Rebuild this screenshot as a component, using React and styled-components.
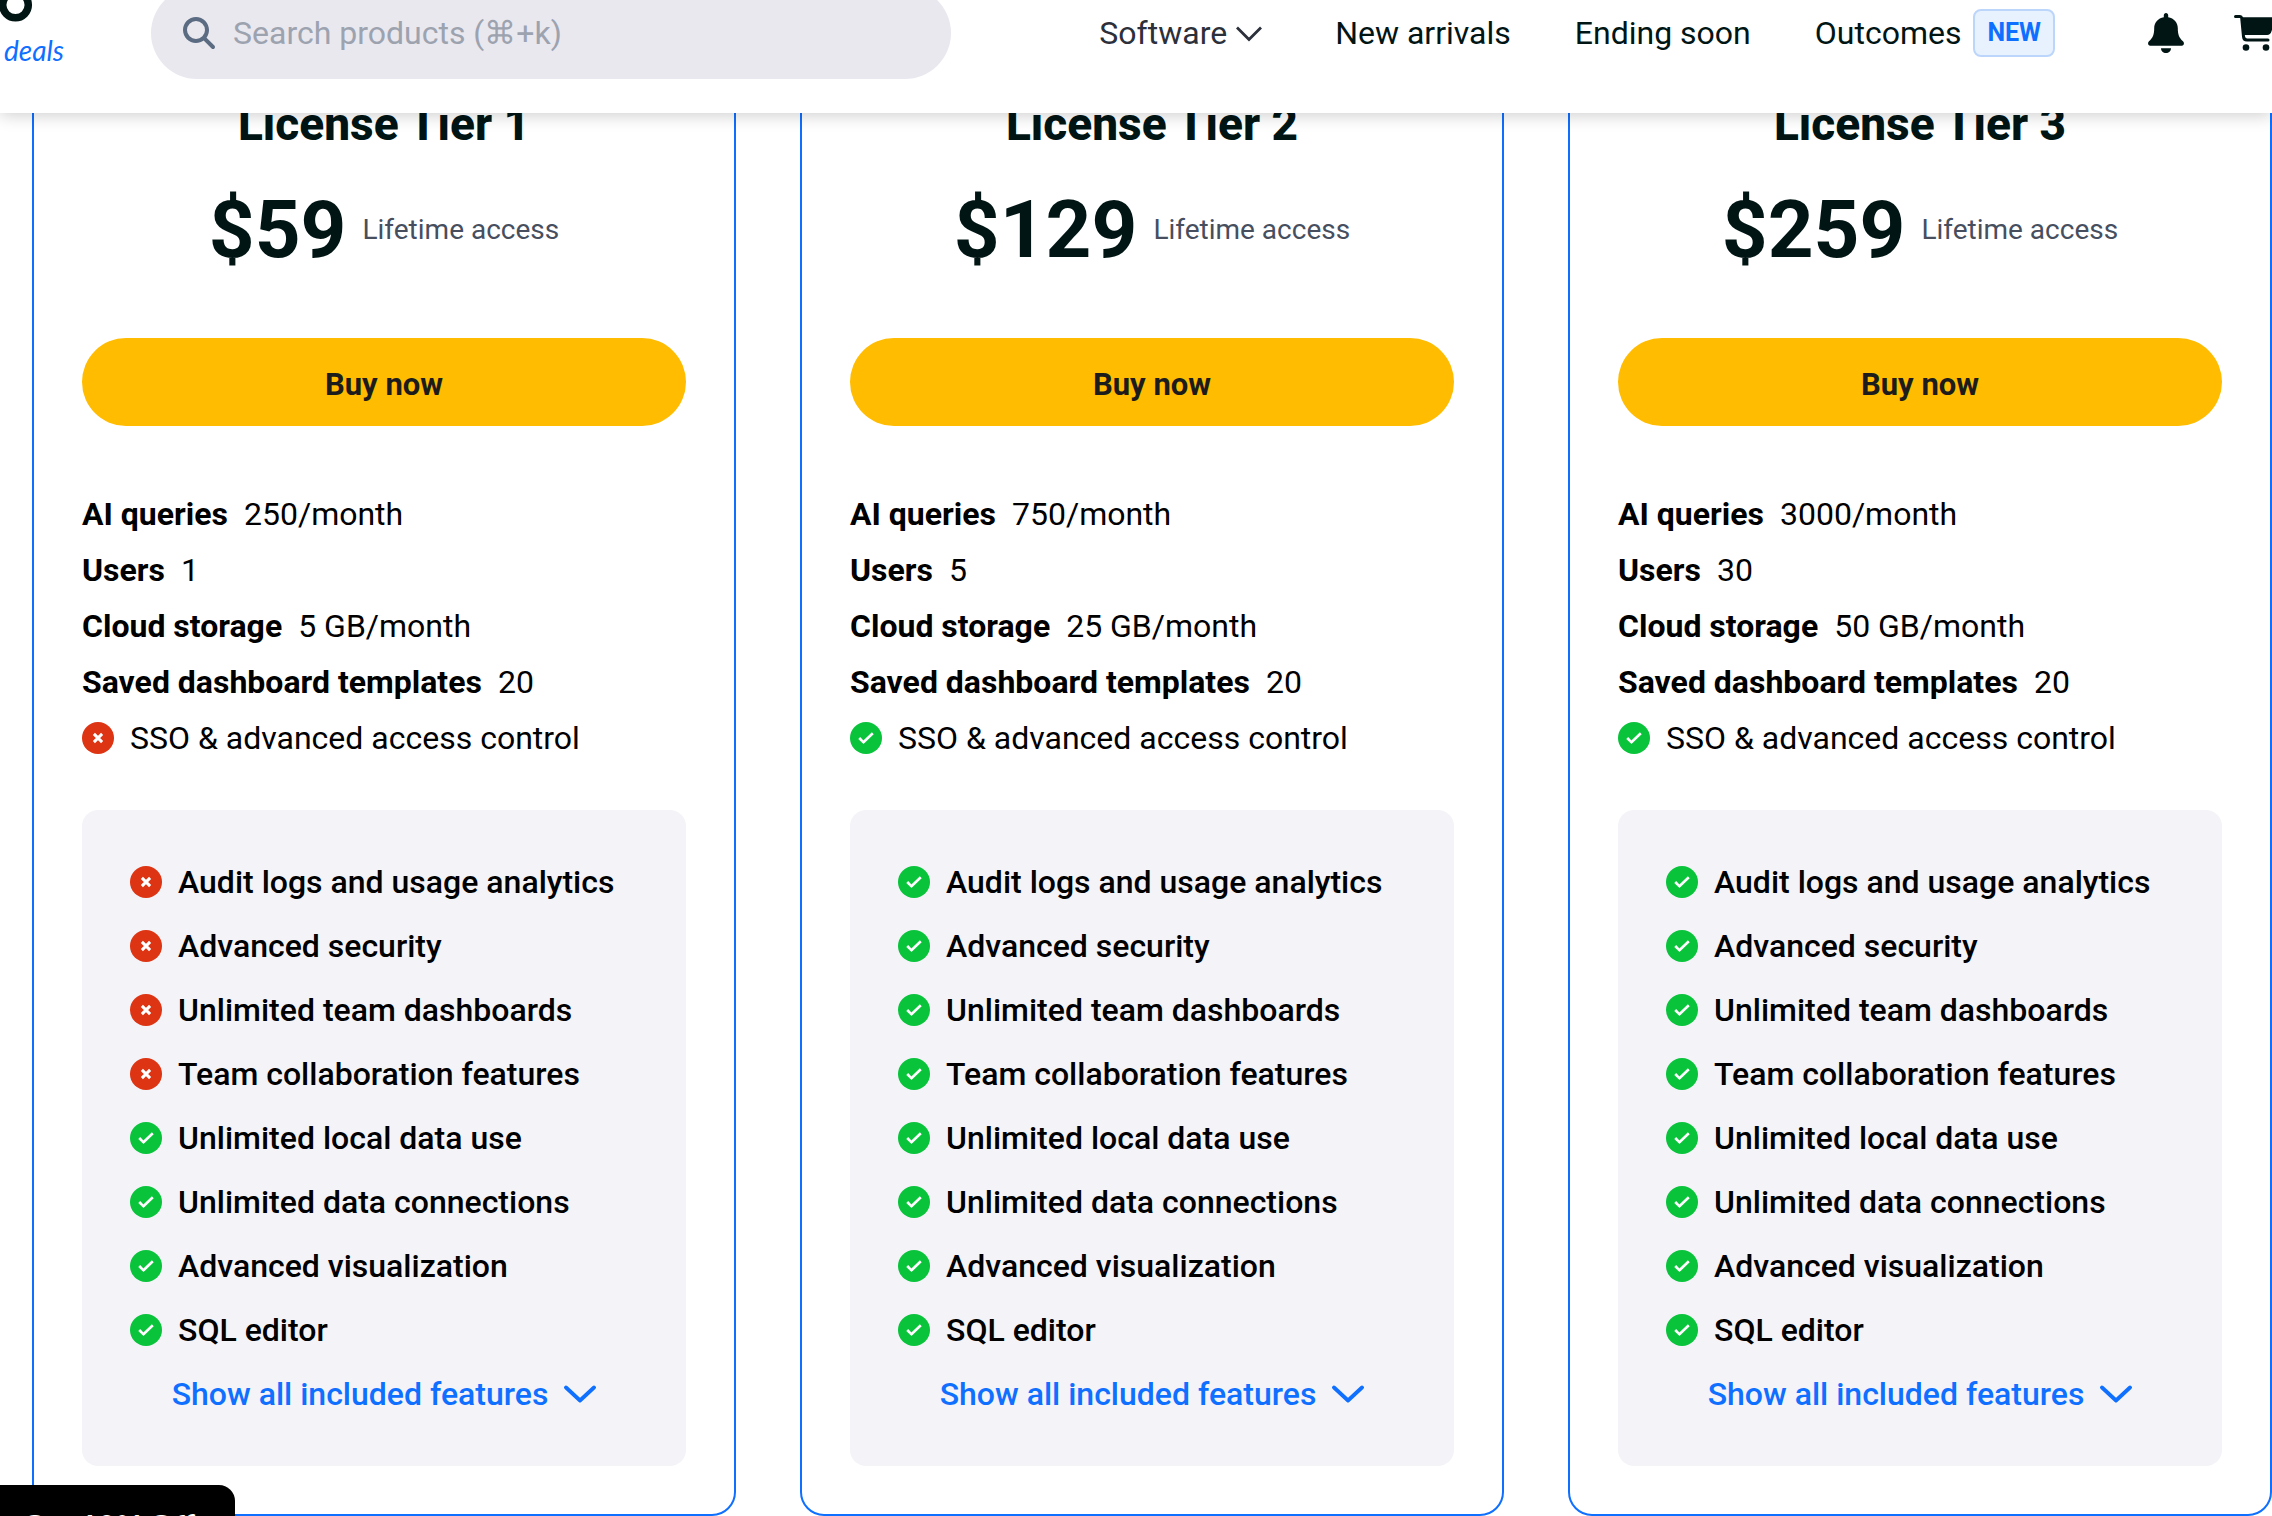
import React from 'react';
import styled, { createGlobalStyle } from 'styled-components';
import { FaMagnifyingGlass } from 'react-icons/fa6';

const colors = {
  ink: '#001514',
  text: '#000000',
  muted: '#474f5f',
  blue: '#0f6fff',
  green: '#09c33b',
  red: '#dd3413',
  yellow: '#ffbc00',
  panel: '#f4f3f8',
  field: '#e9e8ef',
};

const GlobalStyle = createGlobalStyle`
  *, *::before, *::after {
    box-sizing: border-box;
  }

  body {
    margin: 0;
    overflow: hidden;
    background: #fff;
    color: ${colors.text};
    font-family: Roboto, 'Liberation Sans', sans-serif;
    font-size: 32px;
    line-height: 48px;
  }

  svg {
    display: block;
    flex-shrink: 0;
  }
`;

// Header
const Header = styled.header`
  position: relative;
  z-index: 2;
  display: flex;
  align-items: center;
  height: 160px;
  margin-top: -47px;
  background: #fff;
  box-shadow: 0 2px 16px rgba(0, 0, 0, 0.2);
`;

const Logo = styled.a`
  display: flex;
  flex-direction: column;
  flex-shrink: 0;
  width: 151px;
  color: ${colors.ink};
  text-decoration: none;
`;

const LogoText = styled.span`
  padding-left: 4px;
  color: ${colors.blue};
  font-family: Lato, sans-serif;
  font-size: 28px;
  font-style: italic;
  line-height: 56px;
`;

const SearchBox = styled.label`
  display: flex;
  align-items: center;
  gap: 18px;
  flex: 0 1 800px;
  height: 92px;
  padding: 0 32px;
  border-radius: 46px;
  background: ${colors.field};
  color: #5b6b82;
`;

const SearchInput = styled.input`
  flex: 1;
  min-width: 0;
  padding: 0;
  border: none;
  outline: none;
  background: transparent;
  color: ${colors.ink};
  font-family: inherit;
  font-size: 32px;

  &::placeholder {
    color: #9ca3af;
    opacity: 1;
  }
`;

const Nav = styled.nav`
  display: flex;
  align-items: center;
  gap: 64px;
  margin-left: auto;
  white-space: nowrap;
`;

const NavLink = styled.a`
  display: flex;
  align-items: center;
  gap: 12px;
  color: ${colors.ink};
  text-decoration: none;
`;

const NavButton = styled.button`
  display: flex;
  align-items: center;
  gap: 8px;
  padding: 0 8px 0 0;
  border: none;
  background: none;
  color: #2c303b;
  font: inherit;
  cursor: pointer;
`;

const Badge = styled.span`
  padding: 0 12px;
  border: 2px solid #bcd5fb;
  border-radius: 8px;
  background: #e8f2ff;
  color: ${colors.blue};
  font-size: 25px;
  font-weight: 700;
  line-height: 44px;
`;

const Actions = styled.div`
  display: flex;
  align-items: center;
  gap: 50px;
  margin: 0 -4px 0 93px;
`;

const IconButton = styled.button`
  padding: 0;
  border: none;
  background: none;
  color: ${colors.ink};
  cursor: pointer;
`;

// Plans
const Plans = styled.main`
  display: grid;
  grid-template-columns: repeat(3, 1fr);
  gap: 64px;
  margin-top: -67px;
  padding-left: 32px;
`;

const Card = styled.section`
  display: flex;
  flex-direction: column;
  padding: 48px;
  border: 2px solid ${colors.blue};
  border-radius: 24px;
`;

const Title = styled.h2`
  margin: 0;
  color: ${colors.ink};
  font-size: 46px;
  font-weight: 800;
  line-height: 56px;
  text-align: center;
`;

const PriceRow = styled.div`
  display: flex;
  align-items: center;
  justify-content: center;
  gap: 16px;
  margin-top: 30px;
`;

const Price = styled.span`
  color: ${colors.ink};
  font-size: 80px;
  font-weight: 700;
  line-height: 96px;
`;

const Term = styled.span`
  color: ${colors.muted};
  font-size: 28px;
`;

const BuyButton = styled.button`
  height: 88px;
  margin: 60px 0 64px;
  padding: 4px 0 0;
  border: none;
  border-radius: 44px;
  background: ${colors.yellow};
  color: #1c1c1c;
  font-family: inherit;
  font-size: 31px;
  font-weight: 700;
  cursor: pointer;
`;

const List = styled.ul`
  display: flex;
  flex-direction: column;
  gap: ${(props) => props.$gap};
  margin: 0;
  padding: 0;
  list-style: none;
  font-weight: ${(props) => props.$weight || 400};
`;

const Item = styled.li`
  display: flex;
  align-items: center;
  gap: 16px;
`;

const Panel = styled.div`
  display: flex;
  flex-direction: column;
  gap: 16px;
  margin-top: 48px;
  padding: 48px;
  border-radius: 16px;
  background: ${colors.panel};
`;

const ShowAll = styled.button`
  display: flex;
  align-items: center;
  justify-content: center;
  gap: 16px;
  padding: 0;
  border: none;
  background: none;
  color: ${colors.blue};
  font: inherit;
  font-weight: 500;
  cursor: pointer;
`;

const Promo = styled.button`
  position: fixed;
  bottom: -49px;
  left: 0;
  z-index: 3;
  height: 80px;
  padding: 0 40px 0 22px;
  border: none;
  border-radius: 0 16px 16px 0;
  background: #000;
  color: #fff;
  font-family: Lato, sans-serif;
  font-size: 31px;
  font-weight: 900;
  cursor: pointer;
`;

const Status = ({ included }) => (
  <svg width="32" height="32" viewBox="0 0 32 32" role="img" aria-label={included ? 'Included' : 'Not included'}>
    <circle cx="16" cy="16" r="16" fill={included ? colors.green : colors.red} />
    <path
      d={included ? 'M9.2 16l4.300 4.300 9.300-9' : 'M11.900 11.900l8.200 8.200M20.100 11.900l-8.200 8.200'}
      fill="none"
      stroke="#fff"
      strokeWidth={included ? 2.6 : 3}
    />
  </svg>
);

const Chevron = ({ width, height, stroke, cap }) => (
  <svg width={width} height={height} viewBox={`0 0 ${width} ${height}`} aria-hidden="true">
    <path
      d={`M2 2.500L${width / 2} ${height - 2.5}L${width - 2} 2.500`}
      fill="none"
      stroke="currentColor"
      strokeWidth={stroke}
      strokeLinecap={cap}
      strokeLinejoin={cap === 'round' ? 'round' : 'miter'}
    />
  </svg>
);

const Bell = () => (
  <svg width="36" height="40" viewBox="0 0 36 40" aria-hidden="true">
    <path
      d="M18 0c-1.300 0-2.200 1-2.200 2.300v1.900C10 5.200 6.200 9.500 6.200 15c0 6.500-1.200 9.500-5.200 13.300-1.700 1.700-1 4.400 1.200 4.400h31.600c2.200 0 2.900-2.700 1.200-4.400-4-3.800-5.200-6.800-5.200-13.300 0-5.500-3.800-9.800-9.600-10.800V2.300C20.200 1 19.300 0 18 0zM13 35.200h10c0 2.900-2.200 4.800-5 4.800s-5-1.900-5-4.800z"
      fill="currentColor"
    />
  </svg>
);

const Cart = () => (
  <svg width="42" height="36" viewBox="0 0 42 36" aria-hidden="true">
    <path d="M1.500 1.500h4.500c1 0 1.500.6 1.700 1.500L9.500 21.500c.2 2.400 1.500 3.500 3.500 3.500H34" fill="none" stroke="currentColor" strokeWidth="3" strokeLinecap="round" />
    <path d="M7.500 2.300H42l-4.500 14c-.8 2.500-2 3.700-4.500 3.700H10z" fill="currentColor" />
    <circle cx="12" cy="32.500" r="3.300" fill="currentColor" />
    <circle cx="32" cy="32.500" r="3.300" fill="currentColor" />
  </svg>
);

const features = [
  'Audit logs and usage analytics',
  'Advanced security',
  'Unlimited team dashboards',
  'Team collaboration features',
  'Unlimited local data use',
  'Unlimited data connections',
  'Advanced visualization',
  'SQL editor',
];

const plans = [
  { name: 'License Tier 1', price: '$59', queries: '250/month', users: '1', storage: '5 GB/month', missing: 4, sso: false },
  { name: 'License Tier 2', price: '$129', queries: '750/month', users: '5', storage: '25 GB/month', missing: 0, sso: true },
  { name: 'License Tier 3', price: '$259', queries: '3000/month', users: '30', storage: '50 GB/month', missing: 0, sso: true },
];

const PlanCard = ({ plan }) => {
  const specs = [
    ['AI queries', plan.queries],
    ['Users', plan.users],
    ['Cloud storage', plan.storage],
    ['Saved dashboard templates', '20'],
  ];

  return (
    <Card>
      <Title>{plan.name}</Title>
      <PriceRow>
        <Price>{plan.price}</Price>
        <Term>Lifetime access</Term>
      </PriceRow>
      <BuyButton>Buy now</BuyButton>

      <List $gap="8px">
        {specs.map(([label, value]) => (
          <Item key={label}>
            <strong>{label}</strong>
            <span>{value}</span>
          </Item>
        ))}
        <Item>
          <Status included={plan.sso} />
          <span>SSO &amp; advanced access control</span>
        </Item>
      </List>

      <Panel>
        <List $gap="16px" $weight={500}>
          {features.map((feature, index) => (
            <Item key={feature}>
              <Status included={index >= plan.missing} />
              <span>{feature}</span>
            </Item>
          ))}
        </List>
        <ShowAll>
          Show all included features
          <Chevron width={32} height={18} stroke={3.8} cap="round" />
        </ShowAll>
      </Panel>
    </Card>
  );
};

const App = () => (
  <>
    <GlobalStyle />
    <Header>
      <Logo href="#">
        <svg width="34" height="34" viewBox="0 0 34 34" aria-hidden="true">
          <circle cx="15.500" cy="17" r="12.800" fill="none" stroke="currentColor" strokeWidth="7.500" />
        </svg>
        <LogoText>deals</LogoText>
      </Logo>
      <SearchBox>
        <FaMagnifyingGlass size={32} aria-hidden="true" />
        <SearchInput type="search" placeholder="Search products (⌘+k)" aria-label="Search products" />
      </SearchBox>
      <Nav>
        <NavButton>
          Software
          <Chevron width={28} height={17} stroke={2.8} cap="butt" />
        </NavButton>
        <NavLink href="#">New arrivals</NavLink>
        <NavLink href="#">Ending soon</NavLink>
        <NavLink href="#">
          Outcomes
          <Badge>NEW</Badge>
        </NavLink>
      </Nav>
      <Actions>
        <IconButton aria-label="Notifications"><Bell /></IconButton>
        <IconButton aria-label="Cart"><Cart /></IconButton>
      </Actions>
    </Header>

    <Plans>
      {plans.map((plan) => (
        <PlanCard key={plan.name} plan={plan} />
      ))}
    </Plans>

    <Promo>Get 10% Off</Promo>
  </>
);

export default App;
